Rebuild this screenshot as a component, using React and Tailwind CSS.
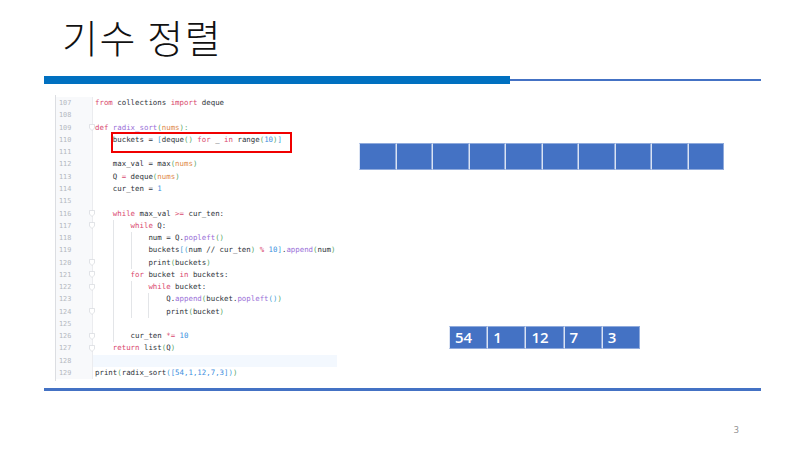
// 기수 정렬 slide
const K = "text-[#d9486e]";
const F = "text-[#9a6fd8]";
const P = "text-[#e08a4a]";
const N = "text-[#3d8fe0]";
const G = "text-[#5aa86a]";
const B = "text-[#3f9fd8]";
const T = "text-[#30343b]";

// g: columns of the indent that carry a guide line, fold: marker in the gutter
const lines = [
  { n: 107, t: [["from", K], [" collections ", T], ["import", K], [" deque", T]] },
  { n: 108, t: [] },
  { n: 109, fold: true, t: [["def", K], [" ", T], ["radix_sort", F], ["(", G], ["nums", P], ["):", G]] },
  { n: 110, i: 1, t: [["buckets = ", T], ["[", B], ["deque", T], ["()", G], [" ", T], ["for", K], [" _ ", T], ["in", K], [" range", T], ["(", G], ["10", N], [")", G], ["]", B]] },
  { n: 111, t: [] },
  { n: 112, i: 1, t: [["max_val = max", T], ["(", G], ["nums", P], [")", G]] },
  { n: 113, i: 1, t: [["Q ", T], ["=", K], [" deque", T], ["(", G], ["nums", P], [")", G]] },
  { n: 114, i: 1, t: [["cur_ten = ", T], ["1", N]] },
  { n: 115, t: [] },
  { n: 116, i: 1, fold: true, t: [["while", K], [" max_val ", T], [">=", K], [" cur_ten:", T]] },
  { n: 117, i: 2, g: [1], fold: true, t: [["while", K], [" Q:", T]] },
  { n: 118, i: 3, g: [1, 2], t: [["num = Q.", T], ["popleft", F], ["()", G]] },
  { n: 119, i: 3, g: [1, 2], t: [["buckets", T], ["[(", B], ["num // cur_ten", T], [")", G], [" ", T], ["%", K], [" ", T], ["10", N], ["]", B], [".", T], ["append", F], ["(", G], ["num", T], [")", G]] },
  { n: 120, i: 3, g: [1, 2], fold: true, t: [["print", T], ["(", G], ["buckets", T], [")", G]] },
  { n: 121, i: 2, g: [1], fold: true, t: [["for", K], [" bucket ", T], ["in", K], [" buckets:", T]] },
  { n: 122, i: 3, g: [1, 2], fold: true, t: [["while", K], [" bucket:", T]] },
  { n: 123, i: 4, g: [1, 2, 3], t: [["Q.", T], ["append", F], ["(", G], ["bucket.", T], ["popleft", F], ["()", B], [")", G]] },
  { n: 124, i: 4, g: [1, 2, 3], fold: true, t: [["print", T], ["(", G], ["bucket", T], [")", G]] },
  { n: 125, i: 2, g: [1], t: [] },
  { n: 126, i: 2, g: [1], fold: true, t: [["cur_ten ", T], ["*=", K], [" ", T], ["10", N]] },
  { n: 127, i: 1, fold: true, t: [["return", K], [" list", T], ["(", G], ["Q", T], [")", G]] },
  { n: 128, hl: true, t: [] },
  { n: 129, t: [["print", T], ["(", G], ["radix_sort", T], ["(", B], ["[", N], ["54,1,12,7,3", N], ["]", N], [")", B], [")", G]] },
];

function CodeLine({ line }) {
  const indent = Array.from({ length: line.i || 0 }, (_, k) => k);
  return (
    <div className="flex h-[12.27px] items-center">
      <div className="flex h-full w-[37px] shrink-0 items-center justify-between border-r border-[#ebecef] bg-[#f8f9fb] pl-[3px] text-[6.8px] text-[#b4b8bf]">
        <span>{line.n}</span>
        {line.fold && (
          <svg width="6" height="7" viewBox="0 0 6 7" className="translate-x-[3px]">
            <path d="M0.5 0.5H5.5V4L3 6.5L0.5 4Z" fill="#fff" stroke="#d6d8dd" strokeWidth="0.7" />
          </svg>
        )}
      </div>
      <div className={`flex h-full flex-1 items-center pl-[2px] whitespace-pre ${line.hl ? "bg-[#f3f8fe]" : ""}`}>
        {indent.map((k) => (
          <span
            key={k}
            className={`h-full w-[17.8px] shrink-0 border-l ${line.g && line.g.includes(k) ? "border-[#e3e5e8]" : "border-transparent"}`}
          />
        ))}
        {line.t.map(([text, color], k) => (
          <span key={k} className={color}>{text}</span>
        ))}
      </div>
    </div>
  );
}

function Cell({ children, className }) {
  return (
    <div className={`flex items-center border border-[#8faadc] border-l-white/80 bg-[#4472c4] pl-[5px] font-['Open_Sans',sans-serif] text-[15px] font-semibold text-white ${className}`}>
      {children}
    </div>
  );
}

export default function App() {
  const empty = [0, 1, 2, 3, 4, 5, 6, 7, 8, 9];
  const values = [54, 1, 12, 7, 3];

  return (
    <div className="flex h-[450px] w-[800px] flex-col overflow-hidden bg-white">
      {/* Title */}
      <h1 className="mt-[13px] ml-[62px] h-[49px] font-['Noto_Sans_CJK_KR',sans-serif] text-[39px] leading-[46px] font-light tracking-[1.6px] text-[#111]">
        기수 정렬
      </h1>

      {/* Title rule */}
      <div className="mt-[14px] ml-[44px] flex w-[717px] items-center">
        <div className="h-[8px] w-[466px] bg-[#0070c0]" />
        <div className="h-[2.5px] flex-1 bg-[#4472c4]" />
      </div>

      <div className="mt-[11px] ml-[55px] flex">
        {/* Code panel */}
        <div className="relative w-[282px] border-l border-[#dcdee2] pt-[2px] pb-[2px] font-['DejaVu_Sans_Mono',monospace] text-[7.4px] leading-[12px]">
          {lines.map((line) => (
            <CodeLine key={line.n} line={line} />
          ))}
          <div className="absolute top-[37px] left-[55px] h-[21px] w-[181px] border-2 border-[#f00000]" />
        </div>

        {/* Arrays */}
        <div className="ml-[22px] flex flex-col">
          <div className="mt-[48px] flex">
            {empty.map((k) => (
              <Cell key={k} className="h-[27px] w-[36.5px]" />
            ))}
          </div>
          <div className="mt-[156px] ml-[90px] flex">
            {values.map((v) => (
              <Cell key={v} className="h-[23px] w-[38.2px]">{v}</Cell>
            ))}
          </div>
        </div>
      </div>

      {/* Bottom rule and page number */}
      <div className="mt-[7px] ml-[44px] h-[2.5px] w-[717px] bg-[#4472c4]" />
      <div className="mt-[33px] mr-[61px] text-right font-['Open_Sans',sans-serif] text-[9px] leading-[12px] text-[#8a8a8a]">3</div>
    </div>
  );
}
